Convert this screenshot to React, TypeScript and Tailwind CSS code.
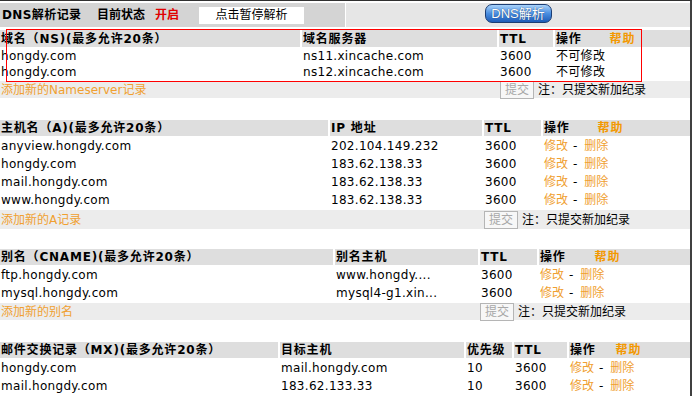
import React from "react";

const HEAD = "bg-[#dedede]";
const ORANGE = "text-[#f0a030]";
const HELP = "text-[#f39800] font-bold";

function HCell({ w, children }: { w: string; children: React.ReactNode }) {
  return <div className={`${w} ${HEAD} flex items-center pl-[1px] font-bold tracking-[0.8px] whitespace-nowrap`}>{children}</div>;
}

function Cell({ w, children }: { w: string; children: React.ReactNode }) {
  return <div className={`${w} flex items-center pl-[1px] tracking-[0.3px] whitespace-nowrap overflow-hidden`}>{children}</div>;
}

function Ops() {
  return (
    <span className="flex items-center tracking-normal">
      <span className={ORANGE}>修改</span>
      <span className="ml-[5px] mr-[7px]">-</span>
      <span className={ORANGE}>删除</span>
    </span>
  );
}

function SubmitBtn() {
  return (
    <span className="flex h-[18px] w-[34px] items-center justify-center border border-[#b5b5b5] bg-[#f7f7f7] text-[#a8a8a8]">
      提交
    </span>
  );
}

export default function App() {
  return (
    <div className="relative h-[396px] w-[696px] overflow-hidden bg-white text-[12px] leading-[16px] text-black font-['DejaVu_Sans','Noto_Sans_CJK_SC',sans-serif]">
      <div className="h-[396px] w-[692px] border-t border-r-2 border-t-[#303030] border-r-[#404040]">
        {/* top bar */}
        <div className="mt-[2px] flex h-[24px] gap-[1px]">
          <div className="flex w-[345px] items-center bg-[#d4d4d4] font-bold">
            <span className="ml-[2px] w-[95px] whitespace-nowrap tracking-[0.4px]">DNS解析记录</span>
            <span className="w-[58px] whitespace-nowrap">目前状态</span>
            <span className="w-[44px] text-[#e00000]">开启</span>
            <div className="flex h-[17px] w-[105px] items-start justify-center bg-white font-normal">点击暂停解析</div>
          </div>
          <div className="flex flex-1 items-start justify-center bg-[#e6e6e6] pt-[1px]">
            <span className="flex h-[19px] w-[67px] items-center justify-center rounded-[7px] border border-[#1c3d73] bg-linear-to-b from-[#a9d3fa] via-[#4a8ee0] to-[#1e5cb8] text-[13px] text-white font-['Liberation_Sans','Noto_Sans_CJK_SC',sans-serif] [text-shadow:0_0_1px_#0b2a5a]">
              DNS解析
            </span>
          </div>
        </div>

        {/* NS section */}
        <div className="mt-[3px] flex h-[17px] gap-[2px]">
          <HCell w="w-[300px]">域名（NS)(最多允许20条）</HCell>
          <HCell w="w-[195px]">域名服务器</HCell>
          <HCell w="w-[54px]">TTL</HCell>
          <HCell w="flex-1">
            <span>操作</span>
            <span className={`ml-[28px] ${HELP}`}>帮助</span>
          </HCell>
        </div>
        {[
          ["hongdy.com", "ns11.xincache.com"],
          ["hongdy.com", "ns12.xincache.com"],
        ].map((r, i) => (
          <div key={i} className={`flex h-[16px] gap-[2px] ${i === 0 ? "mt-[1px]" : ""}`}>
            <Cell w="w-[300px]">{r[0]}</Cell>
            <Cell w="w-[195px]">{r[1]}</Cell>
            <Cell w="w-[54px]">3600</Cell>
            <Cell w="flex-1">不可修改</Cell>
          </div>
        ))}
        <div className="mt-[1px] flex h-[17px] items-center bg-[#ececec]">
          <div className={`w-[500px] pl-[1px] ${ORANGE}`}>添加新的Nameserver记录</div>
          <SubmitBtn />
          <span className="ml-[4px]">注：只提交新加纪录</span>
        </div>

        {/* A section */}
        <div className="mt-[22px] flex h-[16px] gap-[2px]">
          <HCell w="w-[328px]">主机名（A)(最多允许20条）</HCell>
          <HCell w="w-[152px]">IP 地址</HCell>
          <HCell w="w-[57px]">TTL</HCell>
          <HCell w="flex-1">
            <span>操作</span>
            <span className={`ml-[28px] ${HELP}`}>帮助</span>
          </HCell>
        </div>
        {[
          ["anyview.hongdy.com", "202.104.149.232"],
          ["hongdy.com", "183.62.138.33"],
          ["mail.hongdy.com", "183.62.138.33"],
          ["www.hongdy.com", "183.62.138.33"],
        ].map((r, i) => (
          <div key={i} className={`flex h-[18px] gap-[2px] ${i === 0 ? "mt-[1px]" : ""}`}>
            <Cell w="w-[328px]">{r[0]}</Cell>
            <Cell w="w-[152px]">{r[1]}</Cell>
            <Cell w="w-[57px]">3600</Cell>
            <Cell w="flex-1">
              <Ops />
            </Cell>
          </div>
        ))}
        <div className="mt-[1px] flex h-[19px] items-center bg-[#ececec]">
          <div className={`w-[484px] pl-[1px] ${ORANGE}`}>添加新的A记录</div>
          <SubmitBtn />
          <span className="ml-[4px]">注：只提交新加纪录</span>
        </div>

        {/* CNAME section */}
        <div className="mt-[20px] flex h-[16px] gap-[2px]">
          <HCell w="w-[333px]">别名（CNAME)(最多允许20条）</HCell>
          <HCell w="w-[143px]">别名主机</HCell>
          <HCell w="w-[57px]">TTL</HCell>
          <HCell w="flex-1">
            <span>操作</span>
            <span className={`ml-[29px] ${HELP}`}>帮助</span>
          </HCell>
        </div>
        {[
          ["ftp.hongdy.com", "www.hongdy...."],
          ["mysql.hongdy.com", "mysql4-g1.xin..."],
        ].map((r, i) => (
          <div key={i} className={`flex h-[18px] gap-[2px] ${i === 0 ? "mt-[1px]" : ""}`}>
            <Cell w="w-[333px]">{r[0]}</Cell>
            <Cell w="w-[143px]">{r[1]}</Cell>
            <Cell w="w-[57px]">3600</Cell>
            <Cell w="flex-1">
              <Ops />
            </Cell>
          </div>
        ))}
        <div className="mt-[1px] flex h-[17px] items-center bg-[#ececec]">
          <div className={`w-[480px] pl-[1px] ${ORANGE}`}>添加新的别名</div>
          <SubmitBtn />
          <span className="ml-[4px]">注：只提交新加纪录</span>
        </div>

        {/* MX section */}
        <div className="mt-[22px] flex h-[16px] gap-[2px]">
          <HCell w="w-[278px]">邮件交换记录（MX)(最多允许20条）</HCell>
          <HCell w="w-[184px]">目标主机</HCell>
          <HCell w="w-[46px]">优先级</HCell>
          <HCell w="w-[53px]">TTL</HCell>
          <HCell w="flex-1">
            <span>操作</span>
            <span className={`ml-[20px] ${HELP}`}>帮助</span>
          </HCell>
        </div>
        {[
          ["hongdy.com", "mail.hongdy.com"],
          ["mail.hongdy.com", "183.62.133.33"],
        ].map((r, i) => (
          <div key={i} className={`flex h-[18px] gap-[2px] ${i === 0 ? "mt-[1px]" : ""}`}>
            <Cell w="w-[278px]">{r[0]}</Cell>
            <Cell w="w-[184px]">{r[1]}</Cell>
            <Cell w="w-[46px]">10</Cell>
            <Cell w="w-[53px]">3600</Cell>
            <Cell w="flex-1">
              <Ops />
            </Cell>
          </div>
        ))}
      </div>

      {/* red annotation box */}
      <div className="pointer-events-none absolute left-[6px] top-[29px] h-[53px] w-[636px] shadow-[inset_0_0_0_1px_#ff0000]" />
    </div>
  );
}
